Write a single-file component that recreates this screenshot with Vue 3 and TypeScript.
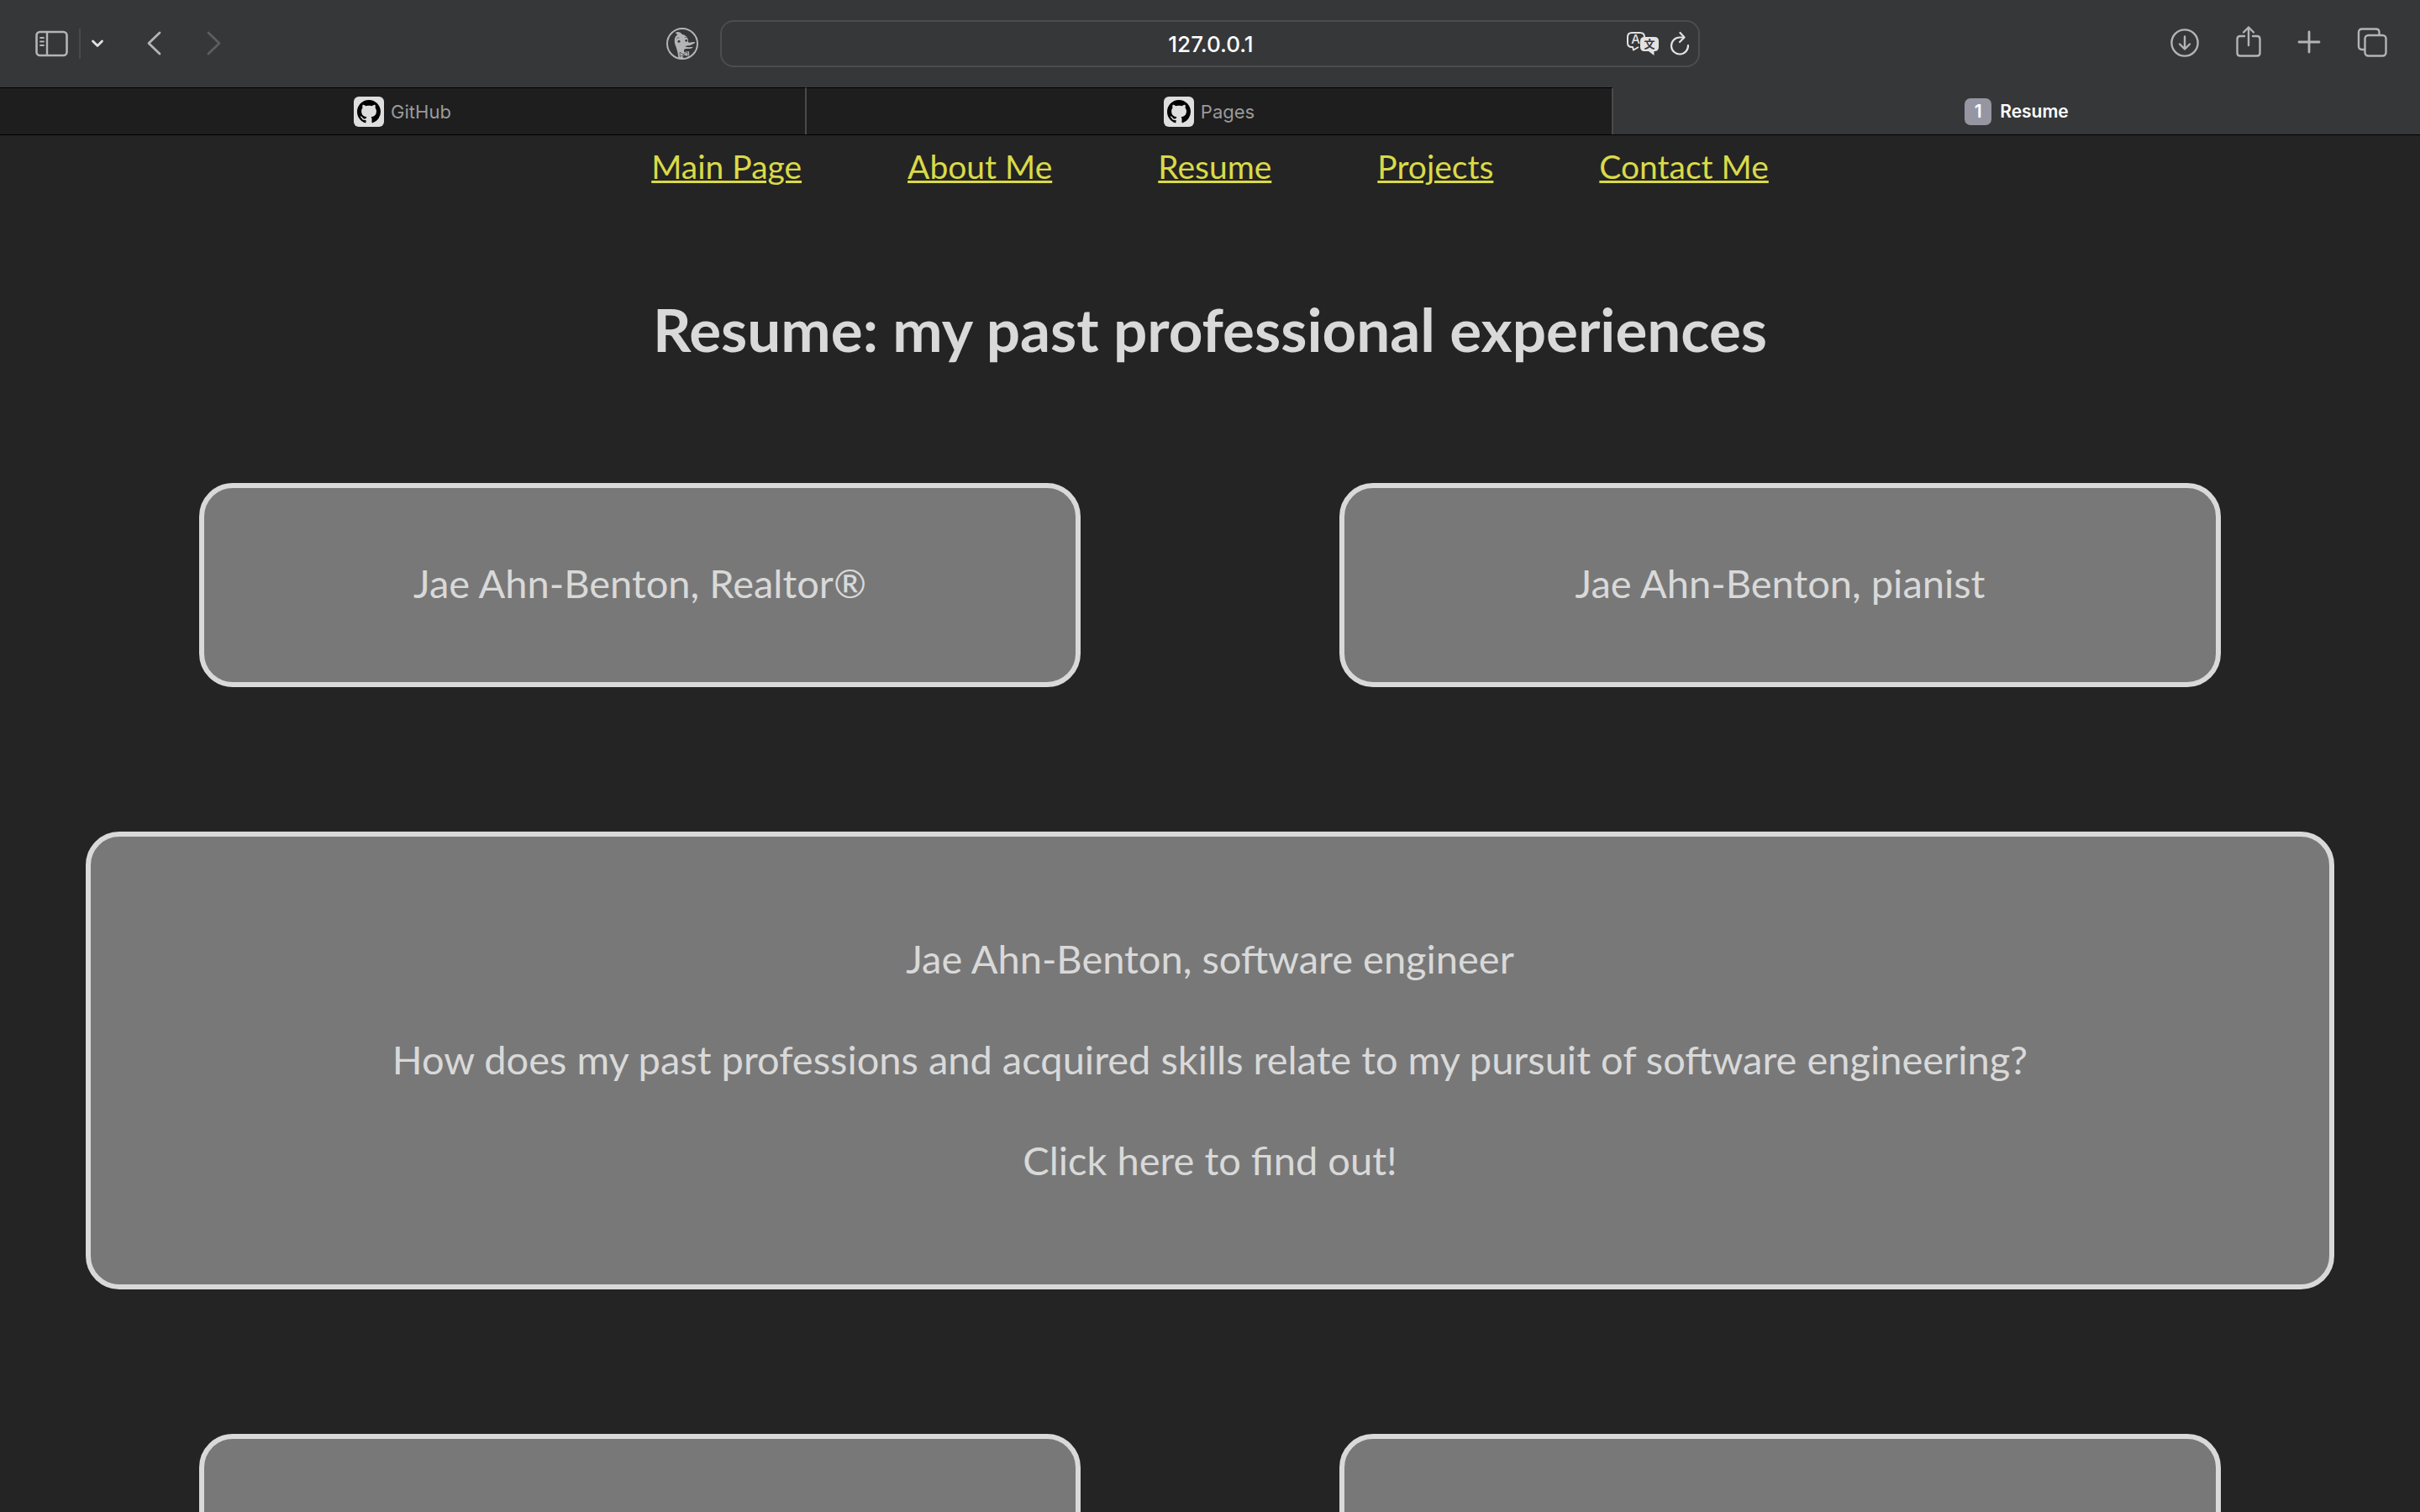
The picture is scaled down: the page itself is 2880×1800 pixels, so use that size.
<script setup lang="ts">
import { ref } from 'vue'

interface Tab { title: string; active: boolean }
interface Card { lines: string[]; wide?: boolean }

const address = ref('127.0.0.1')

const tabs: Tab[] = [
  { title: 'GitHub', active: false },
  { title: 'Pages', active: false },
  { title: 'Resume', active: true },
]

const links: string[] = ['Main Page', 'About Me', 'Resume', 'Projects', 'Contact Me']

const cards: Card[] = [
  { lines: ['Jae Ahn-Benton, Realtor®'] },
  { lines: ['Jae Ahn-Benton, pianist'] },
  {
    wide: true,
    lines: [
      'Jae Ahn-Benton, software engineer',
      'How does my past professions and acquired skills relate to my pursuit of software engineering?',
      'Click here to find out!',
    ],
  },
  { lines: [] },
  { lines: [] },
]
</script>

<template>
  <div class="window">
    <header class="toolbar">
      <div class="side">
        <button class="tool" aria-label="Show sidebar">
          <svg width="40" height="32" viewBox="0 0 40 32" fill="none" stroke="currentColor">
            <rect x="1.500" y="2" width="36" height="28" rx="4" stroke-width="2.600" />
            <path d="M14 2v28" stroke-width="2.400" />
            <path d="M6 9h4M6 13.500h4M6 18h4" stroke-width="1.800" stroke-linecap="round" />
          </svg>
        </button>
        <span class="rule"></span>
        <button class="tool bright" aria-label="Tab groups">
          <svg width="16" height="12" viewBox="0 0 16 12" fill="none" stroke="currentColor" stroke-width="2.800" stroke-linecap="round" stroke-linejoin="round">
            <path d="M2.500 3 8 8.500 13.500 3" />
          </svg>
        </button>
        <button class="tool back" aria-label="Back">
          <svg width="18" height="32" viewBox="0 0 18 32" fill="none" stroke="currentColor" stroke-width="2.800" stroke-linecap="round" stroke-linejoin="round">
            <path d="M16 3 3 15.500 16 28" />
          </svg>
        </button>
        <button class="tool forward" aria-label="Forward" disabled>
          <svg width="18" height="32" viewBox="0 0 18 32" fill="none" stroke="currentColor" stroke-width="2.800" stroke-linecap="round" stroke-linejoin="round">
            <path d="M2 3 15 15.500 2 28" />
          </svg>
        </button>
        <button class="tool duck" aria-label="Privacy report">
          <svg width="38" height="38" viewBox="0 0 114 114">
            <circle cx="57" cy="57" r="54" fill="none" stroke="currentColor" stroke-width="6" />
            <path fill="currentColor" d="M33 18C40 13 50 15 56 23C66 25 74 31 77 40L78 52C85 55 93 50 102 51C104 55 95 58 90 61C82 65 70 64 68 67C71 71 84 69 95 69C94 74 83 76 73 75C66 75 63 77 63 82L64 88L76 84L81 85L82 94L80 105L63 98L58 103L62 110L43 108C42 88 37 75 31 59C28 46 28 32 40 25C39 22 36 21 33 21Z" />
            <path fill="none" stroke="#363739" stroke-width="2" d="M48 88L61 95L76 86L78 102L61 98L49 103Z" />
            <circle cx="45" cy="49" r="4.500" fill="#363739" />
            <circle cx="71" cy="46" r="4" fill="#363739" />
            <path d="M36 40Q40 34 46 36M66 35Q70 32 74 36" stroke="#363739" stroke-width="2" fill="none" />
          </svg>
        </button>
      </div>

      <div class="address">
        <input v-model="address" type="text" aria-label="Address" />
        <div class="address-tools">
          <button class="tool bright" aria-label="Translate">
            <svg width="40" height="32" viewBox="0 0 40 32">
              <path d="M15 20 9 23.500 8 20H7Q2 20 2 15V8Q2 3 7 3H17Q22 3 22 8" fill="none" stroke="currentColor" stroke-width="2" stroke-linejoin="round" />
              <path d="M22 8H34Q39 8 39 13V20Q39 25 34 25H33.500V30L27 25H22Q17 25 17 20V13Q17 8 22 8Z" fill="currentColor" />
              <text x="11.500" y="16" text-anchor="middle" class="glyph-a">A</text>
              <text x="28" y="21" text-anchor="middle" class="glyph-zh">文</text>
            </svg>
          </button>
          <button class="tool bright" aria-label="Reload">
            <svg width="24" height="32" viewBox="0 0 24 32" fill="none" stroke="currentColor" stroke-width="2.200" stroke-linecap="round" stroke-linejoin="round">
              <path d="M22 18A10 10 0 1 1 12 8.500H17" />
              <path d="M12.500 3 17.500 8.500 12 14" />
            </svg>
          </button>
        </div>
      </div>

      <div class="side actions">
        <button class="tool" aria-label="Downloads">
          <svg width="36" height="40" viewBox="0 0 36 40" fill="none" stroke="currentColor" stroke-width="2.400" stroke-linecap="round" stroke-linejoin="round">
            <circle cx="18" cy="21" r="15.600" />
            <path d="M18 13.500V28M12 22.500 18 28.500 24 22.500" />
          </svg>
        </button>
        <button class="tool" aria-label="Share">
          <svg width="30" height="40" viewBox="1 0 30 40" fill="none" stroke="currentColor" stroke-width="2.400" stroke-linecap="round" stroke-linejoin="round">
            <path d="M11 13H6Q2.500 13 2.500 16.500V33Q2.500 36.500 6 36.500H26Q29.500 36.500 29.500 33V16.500Q29.500 13 26 13H21" />
            <path d="M16 24V2.500M10 8.500 16 2.500 22 8.500" />
          </svg>
        </button>
        <button class="tool" aria-label="New tab">
          <svg width="28" height="40" viewBox="0 0 28 40" fill="none" stroke="currentColor" stroke-width="2.800" stroke-linecap="round">
            <path d="M14 8V32M2 20H26" />
          </svg>
        </button>
        <button class="tool" aria-label="Tab overview">
          <svg width="36" height="40" viewBox="0 0 36 40" fill="none" stroke="currentColor" stroke-width="2.400">
            <rect x="9.500" y="12" width="25" height="24.500" rx="4" />
            <path d="M9.500 29H6Q2 29 2 25V8.500Q2 4.500 6 4.500H22.500Q26.500 4.500 26.500 8.500V12" />
          </svg>
        </button>
      </div>
    </header>

    <div class="tabs" role="tablist">
      <button v-for="tab in tabs" :key="tab.title" class="tab" :class="{ active: tab.active }" role="tab" :aria-selected="tab.active">
        <span v-if="tab.active" class="badge">1</span>
        <span v-else class="favicon">
          <svg width="28" height="28" viewBox="0 0 16 16" fill="#000">
            <path d="M8 0C3.580 0 0 3.580 0 8c0 3.540 2.290 6.530 5.470 7.590.4.070.55-.17.55-.38 0-.19-.01-.82-.01-1.490-2.010.37-2.530-.49-2.690-.94-.09-.23-.48-.94-.82-1.130-.28-.15-.68-.52-.01-.53.63-.01 1.080.58 1.230.82.72 1.210 1.870.87 2.330.66.07-.52.28-.87.51-1.070-1.780-.2-3.640-.89-3.640-3.950 0-.87.31-1.590.82-2.150-.08-.2-.36-1.020.08-2.120 0 0 .67-.21 2.200.82.64-.18 1.320-.27 2-.27.68 0 1.360.09 2 .27 1.530-1.040 2.200-.82 2.200-.82.44 1.100.16 1.920.08 2.120.51.56.82 1.270.82 2.150 0 3.070-1.870 3.750-3.650 3.950.29.25.54.73.54 1.480 0 1.070-.01 1.930-.01 2.200 0 .21.15.46.55.38A8.013 8.013 0 0016 8c0-4.420-3.580-8-8-8z" />
          </svg>
        </span>
        <span>{{ tab.title }}</span>
      </button>
    </div>

    <main class="page">
      <nav class="nav">
        <a v-for="link in links" :key="link" href="#">{{ link }}</a>
      </nav>
      <h1>Resume: my past professional experiences</h1>
      <section class="cards">
        <article v-for="(card, i) in cards" :key="i" class="card" :class="{ wide: card.wide }">
          <p v-for="line in card.lines" :key="line">{{ line }}</p>
        </article>
      </section>
    </main>
  </div>
</template>

<style>
body {
  margin: 0;
  background: #242424;
}
</style>

<style scoped>
.window {
  display: flex;
  flex-direction: column;
  height: 100vh;
  overflow: hidden;
  font-family: Inter, 'Liberation Sans', sans-serif;
}

button {
  margin: 0;
  padding: 0;
  border: 0;
  background: none;
  font: inherit;
  color: inherit;
}

.toolbar {
  display: grid;
  grid-template-columns: 1fr 1166px 1fr;
  align-items: center;
  height: 104px;
  flex: none;
  background: #363739;
}

.side {
  display: flex;
  align-items: center;
  padding-left: 42px;
}

.actions {
  justify-content: flex-end;
  gap: 43px;
  padding: 0 39px 4px 0;
}

.tool {
  display: flex;
  color: #b4b4b6;
}

.tool.bright {
  color: #e2e2e2;
}

.rule {
  width: 2px;
  height: 36px;
  margin: 0 12px;
  background: #4a4a4c;
}

.back {
  margin-left: 50px;
}

.forward {
  margin-left: 54px;
}

.forward:disabled {
  color: #5c5d5f;
}

.duck {
  margin: 0 26px 0 auto;
}

.address {
  position: relative;
}

.address input {
  box-sizing: border-box;
  display: block;
  width: 100%;
  height: 56px;
  padding: 0 100px 0 102px;
  border: 2px solid #4c4d4f;
  border-radius: 16px;
  background: transparent;
  color: #fff;
  font: 500 26px Inter, sans-serif;
  text-align: center;
}

.address-tools {
  position: absolute;
  top: 12px;
  right: 12px;
  display: flex;
  gap: 12px;
}

.glyph-a {
  font: 500 15px Inter, sans-serif;
  fill: #e2e2e2;
}

.glyph-zh {
  font: 700 13px 'Noto Sans CJK SC', sans-serif;
  fill: #363739;
}

.tabs {
  display: grid;
  grid-template-columns: repeat(3, 1fr);
  height: 57px;
  flex: none;
  box-sizing: border-box;
  border-bottom: 1px solid #000;
  background: #363739;
}

.tab {
  display: flex;
  align-items: center;
  justify-content: center;
  gap: 8px;
  border-top: 1px solid #000;
  border-right: 2px solid #4a4a4c;
  background: #1e1e1e;
  color: #9a9a9a;
  font-size: 22px;
}

.tab.active {
  gap: 10px;
  border-right: 0;
  border-color: #363739;
  background: #363739;
  color: #fff;
  font-size: 21px;
  font-weight: 600;
}

.favicon {
  display: flex;
  align-items: center;
  justify-content: center;
  width: 36px;
  height: 36px;
  border-radius: 6px;
  background: #dedede;
}

.badge {
  width: 32px;
  border-radius: 7px;
  background: #9696a3;
  line-height: 32px;
}

.page {
  flex: 1;
  min-height: 0;
  color: #d9d9d9;
  font-family: Optima, Lato, sans-serif;
  text-align: center;
}

.nav {
  display: flex;
  justify-content: center;
  gap: 126px;
  padding-top: 13px;
  font-size: 39px;
  line-height: 48px;
}

.nav a {
  color: #dada48;
  text-decoration-thickness: 3px;
}

h1 {
  margin: 126px 0 139px;
  font-size: 71px;
  line-height: 88px;
}

.cards {
  display: grid;
  grid-template-columns: 1fr 1fr;
  gap: 172px 308px;
  padding: 0 237px;
}

.card {
  box-sizing: border-box;
  min-height: 243px;
  padding: 77px 40px 81px;
  border: 6px solid #d9d9d9;
  border-radius: 40px;
  background: #787878;
}

.card.wide {
  grid-column: 1 / -1;
  margin: 0 -135px;
  padding: 109px 40px 111px;
}

.card p {
  margin: 0;
  font-size: 47px;
  line-height: 73px;
}

.card p + p {
  margin-top: 47px;
}
</style>
